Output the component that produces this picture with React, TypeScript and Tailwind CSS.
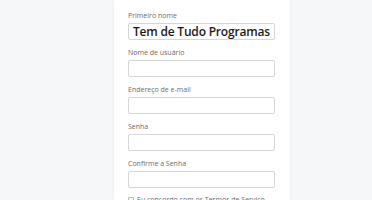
import React from 'react';

const fields = [
  { label: 'Primeiro nome', value: 'Tem de Tudo Programas' },
  { label: 'Nome de usuário', value: '' },
  { label: 'Endereço de e-mail', value: '' },
  { label: 'Senha', value: '' },
  { label: 'Confirme a Senha', value: '' },
];

export default function App() {
  return (
    <div className="h-[200px] w-[372px] overflow-hidden bg-[#f5f7f9] pl-[114px] font-['Open_Sans',sans-serif]">
      <div className="h-full w-[176px] bg-white pl-[14px] pt-[11px] shadow-[0_0_4px_rgba(0,0,0,0.06)]">
        {fields.map((f) => (
          <div key={f.label} className="mb-[8px]">
            <div className="mb-[3px] h-[9px] text-[7px] leading-[9px] text-[#6b6b6b]">{f.label}</div>
            <div className="flex h-[17px] w-[147px] items-center rounded-[2px] border border-[#d6d6d6] px-[4px]">
              {f.value && (
                <span className="whitespace-nowrap text-[12px] font-semibold leading-none tracking-[-0.2px] text-[#1a1a1a]">
                  {f.value}
                </span>
              )}
            </div>
          </div>
        ))}
        <div className="flex items-start gap-[3px] text-[7px] leading-[7px] text-[#6b6b6b]">
          <span className="mt-[1px] h-[6px] w-[6px] rounded-[1px] border border-[#b5b5b5]" />
          <span>Eu concordo com os Termos de Serviço</span>
        </div>
      </div>
    </div>
  );
}
